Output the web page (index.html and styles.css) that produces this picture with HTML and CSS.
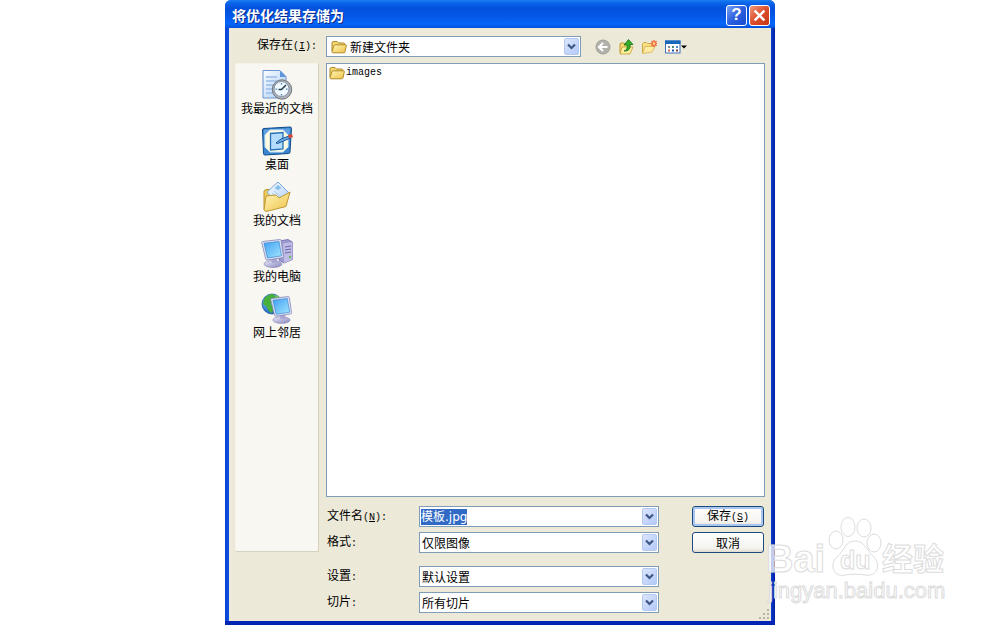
FILE: index.html
```html
<!DOCTYPE html>
<html lang="zh-CN">
<head>
<meta charset="utf-8">
<title>将优化结果存储为</title>
<link rel="stylesheet" href="styles.css">
</head>
<body>
<svg class="defs" aria-hidden="true">
  <defs>
    <linearGradient id="gold" x1="0" y1="0" x2="1" y2="1"><stop offset="0" stop-color="#fff6b8"/><stop offset="1" stop-color="#efc24a"/></linearGradient>
    <linearGradient id="paper" x1="0" y1="0" x2="1" y2="1"><stop offset="0" stop-color="#fafdff"/><stop offset="1" stop-color="#a9cdf5"/></linearGradient>
    <linearGradient id="screen" x1="0" y1="0" x2="1" y2="1"><stop offset="0" stop-color="#3fa0f2"/><stop offset="1" stop-color="#a4e6ff"/></linearGradient>
    <linearGradient id="metal" x1="0" y1="0" x2="1" y2="1"><stop offset="0" stop-color="#eceafa"/><stop offset="1" stop-color="#8583bd"/></linearGradient>
    <radialGradient id="globe" cx=".35" cy=".3" r=".8"><stop offset="0" stop-color="#7fd0ff"/><stop offset="1" stop-color="#0b4fb4"/></radialGradient>
    <symbol id="folder" viewBox="0 0 16 14">
      <path d="M1 11V3q0-1.500 1.500-1.500h3.500l1.500 1.500h5q1.500 0 1.500 1.500v1" fill="#f6d873" stroke="#a98725"/>
      <path d="M1 11.500 3 5.500q.3-.7 1-.7h10.500q1 0 .8 1l-1.300 6q-.2 1-1.200 1H2q-1.200 0-1-1.300z" fill="url(#gold)" stroke="#b08a24"/>
    </symbol>
    <symbol id="chevron" viewBox="0 0 9 7"><path d="M1 1.500l3.500 3.500L8 1.500" fill="none" stroke="#3d5685" stroke-width="2.200"/></symbol>
    <symbol id="monitor" viewBox="0 0 24 30">
      <ellipse cx="12" cy="26" rx="9" ry="3.500" fill="url(#metal)" stroke="#8c8ab5" stroke-width=".7"/>
      <path d="M10 20l6-1v6h-5z" fill="#a9a6d2"/>
      <path d="M1.500 3.500 19 1.500q1 0 1.200 1l2.300 16q0 1-1 1.200L6 22q-1 0-1.300-1L.8 4.800q-.2-1 .7-1.300z" fill="#dfe1f2" stroke="#7e86b7" stroke-width=".8"/>
      <path d="M3 5.300 18 3.500l2.500 14.300L6.500 20z" fill="url(#screen)" stroke="#2878c8" stroke-width=".6"/>
    </symbol>
  </defs>
</svg>

<form class="window" role="dialog" aria-labelledby="title">
  <header class="titlebar">
    <h1 id="title">将优化结果存储为</h1>
    <button type="button" class="caption help" aria-label="帮助">?</button>
    <button type="button" class="caption close" aria-label="关闭"><svg viewBox="0 0 12 12"><path d="M1.500 1.500l9 9M10.500 1.500l-9 9" stroke="#fff" stroke-width="2.200"/></svg></button>
  </header>

  <div class="content">
    <div class="lookin">
      <label class="lookin-label" for="folder-select">保存在<span class="latin">(<u>I</u>):</span></label>
      <div class="combo combo-folder">
        <svg class="combo-icon"><use href="#folder"/></svg>
        <select id="folder-select"><option>新建文件夹</option></select>
        <span class="drop"><svg><use href="#chevron"/></svg></span>
      </div>
      <div class="tools">
        <button type="button" aria-label="后退"><svg viewBox="0 0 16 16"><circle cx="8" cy="8" r="7" fill="#b3b2aa" stroke="#a09f98"/><path d="M12.500 8H4.500M8 4L4 8l4 4" fill="none" stroke="#fff" stroke-width="2"/></svg></button>
        <button type="button" aria-label="向上一级"><svg viewBox="0 0 16 16"><path d="M2 14V5l1-1h3l1 1h5v9z" fill="#f5dc78" stroke="#bd9632"/><path d="M2 15l2-7h11l-3 7z" fill="#fff0a0" stroke="#c49c36" stroke-width=".8"/><path d="M6 12q4-1 3-6H6l4.500-5.500L15 5.500h-3q1 7-6 6.500z" fill="#35ad2c" stroke="#12720f" stroke-width=".8"/></svg></button>
        <button type="button" aria-label="新建文件夹"><svg viewBox="0 0 16 16"><path d="M1.500 14V4.500l1-1h3l1 1h5V8" fill="#f7df84" stroke="#d0aa49"/><path d="M1.500 14.500 4 7.500h10l-3 5.500z" fill="#ffeda4" stroke="#d3ad4e" stroke-width=".8"/><path d="M13 1v7M9.500 4.500h7M10.500 2l5 5M15.500 2l-5 5" stroke="#ee673a" stroke-width="1.300"/><circle cx="13" cy="4.500" r="1.300" fill="#ffd090"/></svg></button>
        <button type="button" class="views" aria-label="查看"><svg viewBox="0 0 24 16"><rect x="1.500" y="2" width="14.500" height="12" fill="#fff" stroke="#3b71b5"/><path d="M1 1.500h15.500V5H1z" fill="#1b66bd"/><path d="M4 7h2v2H4z" fill="#7a8a9c"/><path d="M8 7h2v2H8z" fill="#4b8a75"/><path d="M12 7h2v2h-2z" fill="#4f86ce"/><path d="M4 10.500h2v2H4z" fill="#d9674f"/><path d="M8 10.500h2v2H8z" fill="#174eaa"/><path d="M12 10.500h2v2h-2z" fill="#7b424d"/><path d="M17 6.500h6l-3 3z" fill="#000"/></svg></button>
      </div>
    </div>

    <nav class="places">
      <a class="place" href="#recent">
        <svg viewBox="0 0 32 32"><path d="M2 1.500h17l6 6V29H2z" fill="url(#paper)" stroke="#6c93cf"/><path d="M19 1.500V8h6z" fill="#5c95dc"/><path d="M5 8h11M5 12h11M5 16h9M5 20h7M5 24h7" stroke="#9bbbe8" stroke-width="1.300"/><circle cx="21" cy="20.500" r="9.700" fill="#aeb2b8" stroke="#70757d"/><circle cx="20.500" cy="20" r="7.500" fill="#eefaff" stroke="#8492a5"/><path d="M20.500 14v1.500M20.500 25v1.500M14.500 20.200H16M25 20.200h1.500" stroke="#5583ae" stroke-width="1.300"/><path d="M25 16l-4.500 4.500h-3" fill="none" stroke="#23384e" stroke-width="1.500"/></svg>
        <span>我最近的文档</span>
      </a>
      <a class="place" href="#desktop">
        <svg viewBox="0 0 32 32"><path d="M3 3.500 29 2q1.500 0 1.500 1.500L29 27q0 1.500-1.500 1.500L4 30q-1.500 0-1.500-1.500L1.500 5q0-1.500 1.500-1.500z" fill="#3d86cf" stroke="#104b8c"/><path d="M3 5l26-1.500-.7 8L3.500 16z" fill="#7db5ea" opacity=".6"/><path d="M9 5h13l5 5v12l-5 5H9l-5-5V10z" fill="#fffce1" stroke="#c9e4f5"/><path d="M9.500 8.500 22 7.500V24l-12.500 1z" fill="#b4dcfb" stroke="#2770b8" stroke-width="1.300"/><path d="M15 18l5-4 8-3 1.500 2-7 3-6 2.500z" fill="#6baae4" stroke="#17559d"/><path d="M27 10l4-1 1 3-4 1.500z" fill="#d64b37"/></svg>
        <span>桌面</span>
      </a>
      <a class="place" href="#documents">
        <svg viewBox="0 0 32 32"><path d="M3 28V10l2-1.500h6l2.500 2.500H22v15z" fill="#f1cd58" stroke="#be9530"/><path d="M17 1 29 13 16 24 6 11z" fill="url(#paper)" stroke="#78a6d5"/><path d="M17 4l3 3-3 2-3-2zM11 12l7 6M13 10l7 6" fill="#7fc1ea" stroke="#a4caeb"/><path d="M3 29 5 15l10-1 3 3 11-6-4 14.500L5 30.500z" fill="url(#gold)" stroke="#bf9833"/></svg>
        <span>我的文档</span>
      </a>
      <a class="place" href="#computer">
        <svg viewBox="0 0 32 32"><path d="M18 4l9-1.500L31.500 5v17.500L23 26l-5-3z" fill="#9a98cc" stroke="#6d6aa8" stroke-width=".8"/><path d="M22 6.500 31.500 5v17.500L23 26z" fill="#bebbe4"/><path d="M24 10l6-1M24 13l6-1M24 16l6-1" stroke="#6b69a6"/><circle cx="29" cy="20" r="1.200" fill="#62bd56"/><use href="#monitor" x="0" y="1" width="24" height="30"/></svg>
        <span>我的电脑</span>
      </a>
      <a class="place" href="#network">
        <svg viewBox="0 0 32 32"><circle cx="11" cy="11" r="10" fill="url(#globe)" stroke="#18539c" stroke-width=".7"/><path d="M3 6q4-5 9-5l3 3-3 3-2 4 3 4-2 5q-4-1-5-6l-4-3z" fill="#45b03c"/><path d="M14 2q5 1 6 5l-5 1z" fill="#71c94c"/><use href="#monitor" x="9" y="2" width="23" height="29"/></svg>
        <span>网上邻居</span>
      </a>
    </nav>

    <main class="main">
      <ul class="files">
        <li><svg><use href="#folder"/></svg><span class="latin">images</span></li>
      </ul>
      <div class="fields">
        <label for="filename">文件名<span class="latin">(<u>N</u>):</span></label>
        <div class="combo"><input id="filename" type="text" value="模板.jpg" spellcheck="false" autocomplete="off"><button type="button" class="drop" aria-label="历史文件名"><svg><use href="#chevron"/></svg></button></div>
        <button type="submit" class="push default">保存<span class="latin">(<u>S</u>)</span></button>

        <label for="format">格式<span class="latin">:</span></label>
        <div class="combo"><select id="format"><option>仅限图像</option></select><span class="drop"><svg><use href="#chevron"/></svg></span></div>
        <button type="button" class="push">取消</button>

        <label class="group" for="settings">设置<span class="latin">:</span></label>
        <div class="combo group"><select id="settings"><option>默认设置</option></select><span class="drop"><svg><use href="#chevron"/></svg></span></div>

        <label class="first" for="slices">切片<span class="latin">:</span></label>
        <div class="combo"><select id="slices"><option>所有切片</option></select><span class="drop"><svg><use href="#chevron"/></svg></span></div>
      </div>
    </main>
  </div>
  <svg class="grip" viewBox="0 0 12 12" aria-hidden="true"><path d="M9 1h2v2H9zM5 5h2v2H5zM9 5h2v2H9zM1 9h2v2H1zM5 9h2v2H5zM9 9h2v2H9z" fill="#b8b4a2"/></svg>
</form>

<svg class="watermark" viewBox="0 0 190 94" role="img" aria-label="Baidu 经验">
  <g class="mark">
    <text class="brand" x="2" y="58">Bai</text>
    <ellipse cx="72" cy="26" rx="7" ry="9"/><ellipse cx="84" cy="13" rx="7" ry="9.500"/><ellipse cx="100" cy="14" rx="7" ry="9"/><ellipse cx="110" cy="29" rx="7" ry="9"/>
    <path d="M91 27c-10 0-10 9-18 16-9 8-2 21 8 18 7-1 13-1 20 0 11 2 17-9 9-18-8-7-9-16-19-16z"/>
    <text class="du" x="76" y="55">du</text>
    <text class="cjk" x="118" y="56">经验</text>
    <text class="url" x="4" y="84">jingyan.baidu.com</text>
  </g>
</svg>
<script>
  const filename = document.getElementById('filename');
  filename.focus();
  filename.select();
</script>
</body>
</html>
```
FILE: styles.css
```css
* { box-sizing: border-box; }

body {
  margin: 0;
  min-height: 100vh;
  display: flex;
  justify-content: center;
  background: #fff;
  color: #000;
  font: 12px/14px "Noto Sans CJK SC", sans-serif;
}

button, input, select { font: inherit; color: inherit; margin: 0; }

.defs { position: absolute; width: 0; height: 0; }

.latin { font-family: "Liberation Mono", monospace; font-size: 10px; white-space: pre; }

.window {
  position: relative;
  width: 55%;
  min-width: 550px;
  display: flex;
  flex-direction: column;
  padding: 0 4px 4px;
  background: linear-gradient(90deg, #0a3fd0, #0b50e0 3px, #0b40d0 calc(100% - 4px), #001ea0);
  border-radius: 6px 6px 0 0;
  box-shadow: inset 0 -4px #0024b4;
}

.titlebar {
  display: flex;
  align-items: center;
  gap: 2px;
  height: 28px;
  margin: 0 -4px;
  padding: 2px 5px 0 7px;
  border-radius: 6px 6px 0 0;
  background: linear-gradient(#1a7cf2, #0a66ea 3px, #0450dc 8px, #0457e6 16px, #0566fb 24px, #0450d8);
}

.titlebar h1 {
  flex: 1;
  margin: 0;
  color: #fff;
  font-size: 14px;
  font-weight: 700;
  text-shadow: 1px 1px #0a2a86;
}

.caption {
  width: 21px;
  height: 21px;
  display: grid;
  place-items: center;
  padding: 0;
  border: 1px solid #fff;
  border-radius: 3px;
  color: #fff;
  font: 700 17px/18px "Liberation Sans", sans-serif;
}
.help { background: linear-gradient(135deg, #7ba2f2, #2b5fdf 50%, #1a4bd0); }
.close { background: linear-gradient(135deg, #f0997f, #dc4f2c 50%, #c43412); }
.caption svg { width: 13px; height: 13px; }

.content {
  flex: 1;
  display: grid;
  grid-template: auto 1fr / 84px 1fr;
  column-gap: 7px;
  row-gap: 6px;
  padding: 8px 6px 8px 6px;
  background: #ece9d8;
}

.lookin {
  grid-column: 1 / -1;
  display: grid;
  grid-template-columns: 84px 255px 1fr;
  column-gap: 7px;
}
.lookin-label { padding: 1px 2px 0 0; text-align: right; }

.combo {
  position: relative;
  display: flex;
  height: 21px;
  border: 1px solid #7f9db9;
  background: #fff;
}
.combo select, .combo input {
  flex: 1;
  min-width: 0;
  width: 100%;
  appearance: none;
  border: 0;
  padding: 0 18px 0 2px;
  background: transparent;
  outline: 0;
  line-height: 16px;
}
.combo input { padding-left: 1px; font-family: "DejaVu Sans", "Noto Sans CJK SC", sans-serif; }
.combo input::selection { background: #316ac5; color: #fff; }
.combo-folder select { padding-left: 23px; }
.combo-icon { position: absolute; left: 4px; top: 3px; width: 16px; height: 14px; }

.drop {
  position: absolute;
  top: 1px;
  bottom: 1px;
  right: 1px;
  width: 15px;
  display: grid;
  place-items: center;
  padding: 0;
  border: 1px solid #b5c8f0;
  border-radius: 2px;
  background: linear-gradient(135deg, #dbe6fe, #b4c9f7);
  pointer-events: none;
}
.drop svg { width: 9px; height: 7px; }

.tools { display: flex; gap: 7px; align-items: center; padding-left: 7px; }
.tools button { padding: 0; border: 0; background: none; height: 16px; }
.tools svg { display: block; width: 16px; height: 16px; }
.tools .views svg { width: 24px; }

.places {
  display: flex;
  flex-direction: column;
  gap: 10px;
  margin-bottom: 61px;
  padding-top: 5px;
  background: #f8f7f2;
  border: 1px solid;
  border-color: #f5f3e9 #d6d2c0 #d6d2c0 #f5f3e9;
}
.place {
  display: flex;
  flex-direction: column;
  align-items: center;
  color: #000;
  text-decoration: none;
  white-space: nowrap;
}
.place svg { width: 32px; height: 32px; }

.main { display: flex; flex-direction: column; gap: 9px; min-width: 0; }

.files {
  flex: 1;
  margin: 0;
  padding: 2px;
  list-style: none;
  background: #fff;
  border: 1px solid #7f9db9;
}
.files li { display: flex; align-items: center; gap: 1px; }
.files svg { width: 16px; height: 14px; }

.fields {
  display: grid;
  grid-template-columns: 92px 1fr 72px;
  row-gap: 5px;
  align-items: center;
  padding: 0 1px 0 1px;
}
.fields label, .first { grid-column: 1; }
.fields .combo { margin-right: 33px; }
.group { margin-top: 8px; }

.push {
  height: 21px;
  padding: 0;
  border: 1px solid #1c4a7c;
  border-radius: 3px;
  background: linear-gradient(#fff, #f4f3ee 80%, #dedace);
  line-height: 14px;
}
.default { box-shadow: inset 0 0 0 2px #a9c5f2; }

.grip { position: absolute; right: 5px; bottom: 5px; width: 12px; height: 12px; }

.watermark { position: absolute; right: 46px; bottom: 17px; width: 190px; height: 94px; pointer-events: none; }
.mark { fill: #fff; fill-opacity: .75; stroke: #dcdcdc; stroke-width: 1; }
.brand { font: 700 38px "Liberation Sans", sans-serif; }
.du { font: 700 25px "Liberation Sans", sans-serif; }
.cjk { font: 700 31px "Noto Sans CJK SC", sans-serif; }
.url { font: 22px "Liberation Sans", sans-serif; }
```
